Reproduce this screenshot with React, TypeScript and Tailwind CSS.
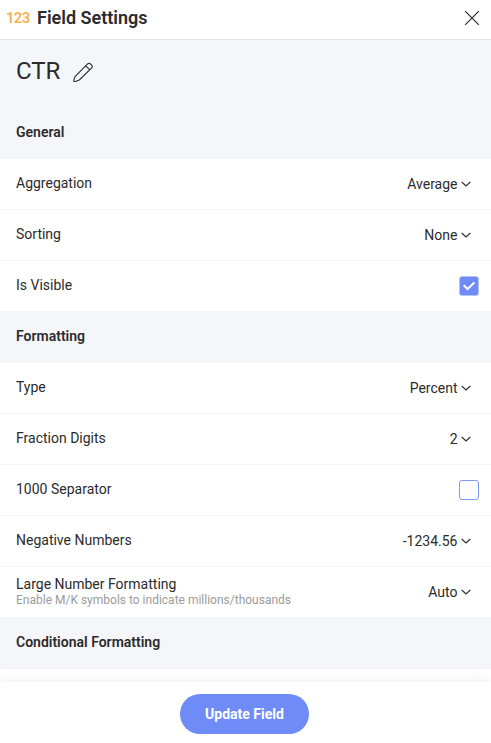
import React from "react";

function Chevron() {
  return (
    <svg className="ml-[3px] h-[10px] w-[10px]" viewBox="0 0 10 10" fill="none" stroke="#2b2b2b" strokeWidth="1.1">
      <path d="M0.7 3 L5 6.9 L9.3 3" />
    </svg>
  );
}

function Section({ children }: { children: React.ReactNode }) {
  return (
    <h2 className="flex h-[52px] shrink-0 items-center bg-[#f5f6fa] px-4 pb-0.5 text-[14px] font-semibold">
      {children}
    </h2>
  );
}

function Row({ label, hint, last, children }: { label: string; hint?: string; last?: boolean; children: React.ReactNode }) {
  return (
    <div
      className={
        last
          ? "flex h-[50px] shrink-0 items-center justify-between pl-4 pr-3"
          : "flex h-[51px] shrink-0 items-center justify-between border-b border-[#f3f3f4] pl-4 pr-3"
      }
    >
      <div className={hint ? "flex flex-col" : "flex flex-col pb-0.5"}>
        <span className="text-[14px] leading-4">{label}</span>
        {hint && <span className="text-[12px] leading-4 text-[#9b9b9b]">{hint}</span>}
      </div>
      {children}
    </div>
  );
}

function Select({ value }: { value: string }) {
  return (
    <button className="flex items-center pr-2 text-[14px] leading-4">
      <span className="pr-[0.5px]">{value}</span>
      <Chevron />
    </button>
  );
}

function Check({ checked }: { checked?: boolean }) {
  return checked ? (
    <span className="flex h-5 w-5 items-center justify-center rounded-[3px] border border-[#b4c3fa] bg-[#6e8bf8]">
      <svg className="h-3 w-3" viewBox="0 0 12 12" fill="none" stroke="#fff" strokeWidth="2.1">
        <path d="M0.6 5.2 L4.6 9 L11.4 2.4" />
      </svg>
    </span>
  ) : (
    <span className="h-5 w-5 rounded-[3px] border border-[#7f99f8] bg-white" />
  );
}

export default function App() {
  return (
    <div className="flex h-[743px] w-[491px] flex-col overflow-hidden bg-white font-[Roboto,sans-serif] text-[#2b2b2b]">
      <header className="flex h-10 shrink-0 items-center border-b border-[#e4e5e9] pl-[6px] pr-[11px] pb-[3px]">
        <span className="w-[24px] pt-px text-[15px] font-semibold tracking-[-0.7px] text-[#fbb04e]">123</span>
        <h1 className="ml-[7px] flex-1 text-[18px] leading-6 font-semibold">Field Settings</h1>
        <svg className="h-4 w-4" viewBox="0 0 16 16" fill="none" stroke="#2b2b2b" strokeWidth="1.2">
          <path d="M1.2 1.2 L14.8 14.8 M14.8 1.2 L1.2 14.8" />
        </svg>
      </header>
      <div className="flex h-[67px] shrink-0 items-center bg-[#f5f6fa] px-4 pb-1">
        <span className="pb-0.5 text-[24px] leading-7">CTR</span>
        <svg className="ml-[13px] h-5 w-5" viewBox="0 0 20 20" fill="none" stroke="#2b2b2b" strokeWidth="1.1" strokeLinejoin="round">
          <path d="M1.1 19.4 Q0.6 18.6 1 17.4 L2.2 14.3 L14.6 1.9 Q16 0.6 17.6 2 L18.7 3.1 Q19.9 4.5 18.7 5.9 L6.3 18 L3 19.2 Q1.8 19.7 1.1 19.4 Z M12.7 3.8 L16.8 7.8" />
        </svg>
      </div>
      <Section>General</Section>
      <Row label="Aggregation"><Select value="Average" /></Row>
      <Row label="Sorting"><Select value="None" /></Row>
      <Row label="Is Visible" last><Check checked /></Row>
      <Section>Formatting</Section>
      <Row label="Type"><Select value="Percent" /></Row>
      <Row label="Fraction Digits"><Select value="2" /></Row>
      <Row label="1000 Separator"><Check /></Row>
      <Row label="Negative Numbers"><Select value="-1234.56" /></Row>
      <Row label="Large Number Formatting" hint="Enable M/K symbols to indicate millions/thousands" last><Select value="Auto" /></Row>
      <Section>Conditional Formatting</Section>
      <div className="h-[13px] shrink-0 bg-white" />
      <footer className="flex flex-1 items-start justify-center bg-white pt-3 shadow-[0_0_12px_rgba(0,0,0,0.09)]">
        <button className="mr-0.5 flex h-10 w-[129px] items-center justify-center rounded-full bg-[#6e8bf8] text-[14px] font-bold text-white">
          Update Field
        </button>
      </footer>
    </div>
  );
}
